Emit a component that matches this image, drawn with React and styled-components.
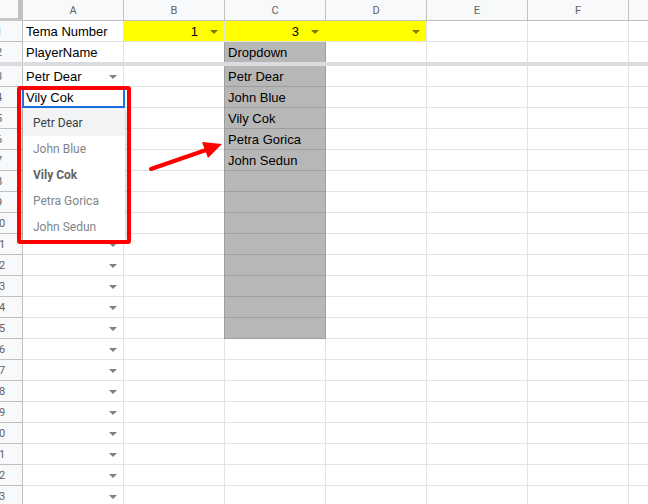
import React from "react";
import styled, { createGlobalStyle, css } from "styled-components";

const GlobalStyle = createGlobalStyle`
  html, body {
    margin: 0;
    padding: 0;
    background: #ffffff;
  }
  body {
    font-family: "Liberation Sans", Arial, sans-serif;
  }
`;

const COLS = ["A", "B", "C", "D", "E", "F", ""];
const NAMES = ["Petr Dear", "John Blue", "Vily Cok", "Petra Gorica", "John Sedun"];

// rows 3..23: A holds the dropdown column, C the gray source list (rows 2-15)
const rows = [];
for (let n = 3; n <= 23; n++) {
  rows.push({
    n,
    a: n === 3 ? "Petr Dear" : "",
    aCaret: n !== 4,
    c: NAMES[n - 3] || "",
    cGray: n <= 15,
  });
}

export default function App() {
  return (
    <>
      <GlobalStyle />
      <Page>
        <Sheet>
          <HeaderRow>
            <Corner />
            {COLS.map((c, i) => (
              <ColHead key={i}>{c}</ColHead>
            ))}
          </HeaderRow>

          <Row $h={21}>
            <RowHead>1</RowHead>
            <Cell>Tema Number</Cell>
            <Cell $bg="#ffff00" $right>
              1<Caret $onYellow />
            </Cell>
            <Cell $bg="#ffff00" $right>
              3<Caret $onYellow />
            </Cell>
            <Cell $bg="#ffff00" $right>
              <Caret $onYellow />
            </Cell>
            <Cell />
            <Cell />
            <Cell />
          </Row>

          <Row $h={20}>
            <RowHead $noBorder>2</RowHead>
            <Cell $noBorder>PlayerName</Cell>
            <Cell $noBorder />
            <Cell $gray $noBorder>Dropdown</Cell>
            <Cell $noBorder />
            <Cell $noBorder />
            <Cell $noBorder />
            <Cell $noBorder />
          </Row>
          <FreezeBar />

          {rows.map((r) => (
            <Row key={r.n} $h={21}>
              <RowHead>{r.n}</RowHead>
              <Cell $right={!r.a}>
                {r.a && <CellText>{r.a}</CellText>}
                {r.aCaret && <Caret />}
              </Cell>
              <Cell />
              <Cell $gray={r.cGray}>{r.c}</Cell>
              <Cell />
              <Cell />
              <Cell />
              <Cell />
            </Row>
          ))}
        </Sheet>

        <Editor>Vily Cok</Editor>
        <Menu>
          {NAMES.map((name, i) => (
            <MenuItem key={name} $active={i === 0} $bold={name === "Vily Cok"}>
              {name}
            </MenuItem>
          ))}
        </Menu>
        <Highlight />
        <Arrow width="90" height="50" viewBox="0 0 90 50">
          <line x1="11" y1="39" x2="66" y2="20" stroke="#ff0000" strokeWidth="4" strokeLinecap="round" />
          <polygon points="82,14 62,12 68,28" fill="#ff0000" />
        </Arrow>
      </Page>
    </>
  );
}

const Page = styled.div`
  position: relative;
  width: 648px;
  height: 504px;
  overflow: hidden;
  background: #fff;
`;

const Sheet = styled.div`
  display: flex;
  flex-direction: column;
  margin-left: -24px;
  width: max-content;
`;

const gridCols = css`
  display: grid;
  grid-template-columns: 47px repeat(7, 101px);
`;

const HeaderRow = styled.div`
  ${gridCols};
  height: 21px;
  background: #f8f9fa;
`;

const Corner = styled.div`
  box-sizing: border-box;
  background: #f8f9fa;
  border-right: 5px solid #c0c0c0;
  border-bottom: 3px solid #c7c7c7;
`;

const ColHead = styled.div`
  box-sizing: border-box;
  display: flex;
  align-items: center;
  justify-content: center;
  border-right: 1px solid #c0c0c0;
  border-bottom: 1px solid #c0c0c0;
  font-family: Roboto, "Liberation Sans", sans-serif;
  font-size: 11px;
  color: #5f6368;
`;

const Row = styled.div`
  ${gridCols};
  height: ${(p) => p.$h}px;
`;

const RowHead = styled.div`
  box-sizing: border-box;
  display: flex;
  align-items: center;
  justify-content: center;
  padding-top: 1px;
  background: #f8f9fa;
  border-right: 1px solid #c0c0c0;
  border-bottom: ${(p) => (p.$noBorder ? "none" : "1px solid #c0c0c0")};
  font-family: Roboto, "Liberation Sans", sans-serif;
  font-size: 11px;
  color: #5f6368;
`;

const Cell = styled.div`
  box-sizing: border-box;
  display: flex;
  align-items: center;
  justify-content: ${(p) => (p.$right ? "flex-end" : "space-between")};
  padding: 2px 6px 0 3px;
  background: ${(p) => (p.$gray ? "#b7b7b7" : p.$bg || "#fff")};
  border-right: 1px solid ${(p) => (p.$gray ? "#9e9e9e" : "#e2e3e3")};
  border-bottom: ${(p) =>
    p.$noBorder ? "none" : `1px solid ${p.$gray ? "#9e9e9e" : "#e2e3e3"}`};
  box-shadow: ${(p) => (p.$gray ? "-1px 0 0 #9e9e9e" : "none")};
  font-size: 13px;
  line-height: 18px;
  color: #000;
  white-space: nowrap;
`;

const CellText = styled.span`
  flex: 1;
`;

const Caret = styled.span`
  width: 0;
  height: 0;
  margin-left: 12px;
  margin-bottom: 1px;
  border-left: 4px solid transparent;
  border-right: 4px solid transparent;
  border-top: 4px solid ${(p) => (p.$onYellow ? "#7a7a00" : "#7f7f7f")};
  flex-shrink: 0;
`;

const FreezeBar = styled.div`
  height: 4px;
  background: #dadce0;
`;

const Editor = styled.div`
  position: absolute;
  left: 22px;
  top: 87px;
  box-sizing: border-box;
  width: 103px;
  height: 21px;
  padding-left: 2px;
  border: 2px solid #1a73e8;
  background: #fff;
  font-size: 13px;
  line-height: 17px;
  color: #000;
`;

const Menu = styled.div`
  position: absolute;
  left: 23px;
  top: 109px;
  box-sizing: border-box;
  width: 102px;
  height: 131px;
  padding-top: 1px;
  display: flex;
  flex-direction: column;
  background: #fff;
  box-shadow: 0 1px 4px rgba(0, 0, 0, 0.35);
`;

const MenuItem = styled.div`
  height: 26px;
  flex-shrink: 0;
  display: flex;
  align-items: center;
  padding-left: 10px;
  font-family: Roboto, "Liberation Sans", sans-serif;
  font-size: 12px;
  font-weight: ${(p) => (p.$bold ? 700 : 400)};
  color: ${(p) => (p.$active ? "#3c4043" : p.$bold ? "#5f6368" : "#80868b")};
  background: ${(p) => (p.$active ? "#f1f3f4" : "transparent")};
`;

const Highlight = styled.div`
  position: absolute;
  left: 17px;
  top: 86px;
  box-sizing: border-box;
  width: 114px;
  height: 158px;
  border: 4px solid #ff0000;
  border-radius: 3px;
`;

const Arrow = styled.svg`
  position: absolute;
  left: 140px;
  top: 130px;
`;
